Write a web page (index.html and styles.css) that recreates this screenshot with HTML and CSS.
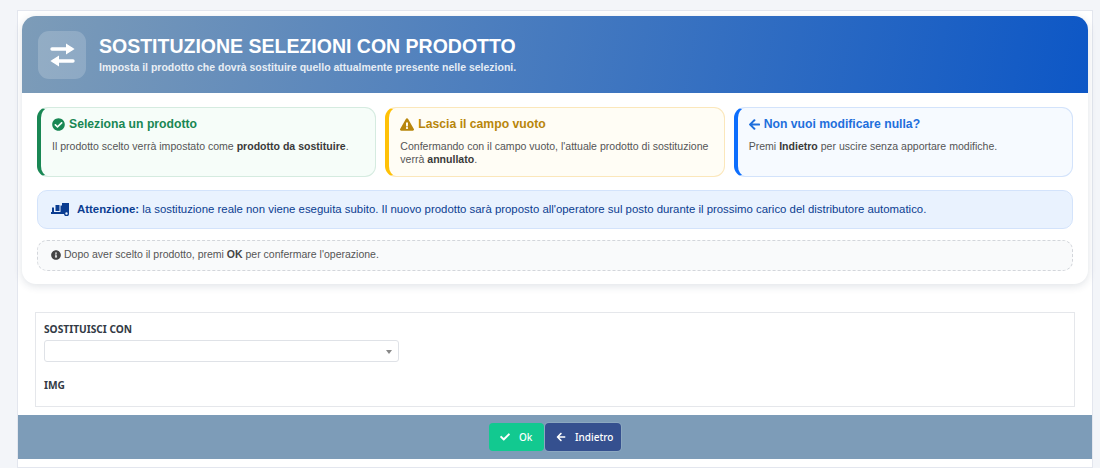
FILE: index.html
```html
<!DOCTYPE html>
<html lang="it">
<head>
<meta charset="utf-8">
<title>Sostituzione selezioni con prodotto</title>
<link rel="stylesheet" href="styles.css">
</head>
<body>
<div class="panel">
  <section class="hero">
    <header class="hero-head">
      <div class="hero-icon">
        <svg class="ico-exchange" viewBox="0 0 25 24"><path class="shaft" d="M2 6H21M23 18H4"/><path d="M16 .6 24.6 6 16 11.4ZM9 12.6.4 18 9 23.4Z"/></svg>
      </div>
      <div>
        <h1>SOSTITUZIONE SELEZIONI CON PRODOTTO</h1>
        <p>Imposta il prodotto che dovrà sostituire quello attualmente presente nelle selezioni.</p>
      </div>
    </header>
    <div class="hero-body">
      <div class="cards">
        <article class="card card-green">
          <h2><svg class="ico-13" viewBox="0 0 512 512"><path d="M504 256c0 136.967-111.033 248-248 248S8 392.967 8 256 119.033 8 256 8s248 111.033 248 248zM227.314 387.314l184-184c6.248-6.248 6.248-16.379 0-22.627l-22.627-22.627c-6.248-6.249-16.379-6.249-22.628 0L216 308.118l-70.059-70.059c-6.248-6.248-16.379-6.248-22.628 0l-22.627 22.627c-6.248 6.248-6.248 16.379 0 22.627l104 104c6.249 6.249 16.379 6.249 22.628.001z"/></svg>Seleziona un prodotto</h2>
          <p>Il prodotto scelto verrà impostato come <b>prodotto da sostituire</b>.</p>
        </article>
        <article class="card card-yellow">
          <h2><svg class="ico-tri" viewBox="0 0 576 512"><path d="M569.517 440.013C587.975 472.007 564.806 512 527.94 512H48.054c-36.937 0-59.999-40.055-41.577-71.987L246.423 23.985c18.467-32.009 64.72-31.951 83.154 0l239.94 416.028zM288 354c-25.405 0-46 20.595-46 46s20.595 46 46 46 46-20.595 46-46-20.595-46-46-46zm-43.673-165.346l7.418 136c.347 6.364 5.609 11.346 11.982 11.346h48.546c6.373 0 11.635-4.982 11.982-11.346l7.418-136c.375-6.874-5.098-12.654-11.982-12.654h-63.383c-6.884 0-12.356 5.78-11.981 12.654z"/></svg>Lascia il campo vuoto</h2>
          <p>Confermando con il campo vuoto, l'attuale prodotto di sostituzione verrà <b>annullato</b>.</p>
        </article>
        <article class="card card-blue">
          <h2><svg class="ico-arrow" viewBox="0 0 448 512"><path d="M257.5 445.1l-22.2 22.2c-9.4 9.4-24.6 9.4-33.9 0L7 273c-9.4-9.4-9.4-24.6 0-33.9L201.4 44.7c9.4-9.4 24.6-9.4 33.9 0l22.2 22.2c9.5 9.5 9.3 25-.4 34.3L136.6 216H424c13.3 0 24 10.7 24 24v32c0 13.3-10.7 24-24 24H136.6l120.5 114.8c9.8 9.3 10 24.8.4 34.3z"/></svg>Non vuoi modificare nulla?</h2>
          <p>Premi <b>Indietro</b> per uscire senza apportare modifiche.</p>
        </article>
      </div>
      <div class="alert">
        <svg class="ico-truck" viewBox="0 0 18 13"><path fill-rule="evenodd" d="M11 0h7v10.5a2.5 2.5 0 0 1-5 .4H0V9h1V4.5h2V9h6.5V2.5H11Zm4.5 9.3a1.2 1.2 0 1 0 0 2.4 1.2 1.2 0 0 0 0-2.4ZM4.5 2h4v6h-4Z"/></svg>
        <span><b>Attenzione:</b> la sostituzione reale non viene eseguita subito. Il nuovo prodotto sarà proposto all'operatore sul posto durante il prossimo carico del distributore automatico.</span>
      </div>
      <div class="note">
        <svg class="ico-info" viewBox="0 0 512 512"><path d="M256 8C119.043 8 8 119.083 8 256c0 136.997 111.043 248 248 248s248-111.003 248-248C504 119.083 392.957 8 256 8zm0 110c23.196 0 42 18.804 42 42s-18.804 42-42 42-42-18.804-42-42 18.804-42 42-42zm56 254c0 6.627-5.373 12-12 12h-88c-6.627 0-12-5.373-12-12v-24c0-6.627 5.373-12 12-12h12v-64h-12c-6.627 0-12-5.373-12-12v-24c0-6.627 5.373-12 12-12h64c6.627 0 12 5.373 12 12v100h12c6.627 0 12 5.373 12 12v24z"/></svg>
        <span>Dopo aver scelto il prodotto, premi <b>OK</b> per confermare l'operazione.</span>
      </div>
    </div>
  </section>
  <form class="form-box">
    <label class="field-label">SOSTITUISCI CON</label>
    <div class="select"><i class="caret"></i></div>
    <label class="field-label field-img">IMG</label>
  </form>
  <footer class="actions">
    <button type="button" class="btn btn-ok"><svg class="ico-btn" viewBox="0 0 512 512"><path d="M173.898 439.404l-166.4-166.4c-9.997-9.997-9.997-26.206 0-36.204l36.203-36.204c9.997-9.998 26.207-9.998 36.204 0L192 312.69 432.095 72.596c9.997-9.997 26.207-9.997 36.204 0l36.203 36.204c9.997 9.997 9.997 26.206 0 36.204l-294.4 294.401c-9.998 9.997-26.207 9.997-36.204-.001z"/></svg>Ok</button>
    <button type="button" class="btn btn-back"><svg class="ico-btn" viewBox="0 0 448 512"><path d="M257.5 445.1l-22.2 22.2c-9.4 9.4-24.6 9.4-33.9 0L7 273c-9.4-9.4-9.4-24.6 0-33.9L201.4 44.7c9.4-9.4 24.6-9.4 33.9 0l22.2 22.2c9.5 9.5 9.3 25-.4 34.3L136.6 216H424c13.3 0 24 10.7 24 24v32c0 13.3-10.7 24-24 24H136.6l120.5 114.8c9.8 9.3 10 24.8.4 34.3z"/></svg>Indietro</button>
  </footer>
</div>
</body>
</html>
```
FILE: styles.css
```css
* { box-sizing: border-box; }
html, body { margin: 0; height: 468px; overflow: hidden; }
body {
  background: #f3f5f9;
  font-family: "Liberation Sans", Arial, sans-serif;
  padding: 10px 7px 0 17px;
}
svg { fill: currentColor; display: block; flex: none; }
.panel {
  background: #fff;
  border: 1px solid #e3e6ee;
  height: 458px;
  padding-top: 5px;
}
.hero {
  margin: 0 4px;
  height: 268px;
  border-radius: 14px;
  background: #fff;
  box-shadow: 0 2px 8px rgba(30, 50, 80, .14);
  overflow: hidden;
}
.hero-head {
  height: 77px;
  display: flex;
  align-items: center;
  gap: 13px;
  padding: 0 16px;
  color: #fff;
  background: linear-gradient(100deg, #7d9cb8 0%, #0d57c6 100%);
}
.hero-icon {
  width: 48px;
  height: 48px;
  border-radius: 11px;
  background: rgba(255, 255, 255, .18);
  display: flex;
  align-items: center;
  justify-content: center;
}
.ico-exchange { width: 25px; height: 24px; }
.ico-exchange .shaft { fill: none; stroke: currentColor; stroke-width: 3.4; stroke-linecap: round; }
.hero-head h1 { margin: 0; font-size: 19.5px; line-height: 23px; font-weight: 700; }
.hero-head p { margin: 3px 0 0; font-size: 10.5px; line-height: 13px; font-weight: 700; opacity: .85; }
.hero-body { padding: 14px 15px 0; }
.cards { display: grid; grid-template-columns: repeat(3, 1fr); gap: 9px; }
.card {
  height: 70px;
  border: 1px solid;
  border-left-width: 4px;
  border-radius: 11px;
  padding: 8px 11px;
}
.card h2 {
  margin: 0 0 7px;
  font-size: 12.2px;
  line-height: 17px;
  font-weight: 700;
  display: flex;
  align-items: center;
  gap: 4px;
}
.card p { margin: 0; font-size: 10.55px; line-height: 13px; color: #555; }
.card b { color: #3a3a3a; }
.ico-13 { width: 13px; height: 13px; }
.ico-tri { width: 14px; height: 13px; }
.ico-arrow { width: 11px; height: 13px; }
.card-green { background: #f6fdf9; border-color: #d5ebe0; border-left-color: #198754; }
.card-green h2 { color: #198754; }
.card-yellow { background: #fffdf5; border-color: #fbe7bb; border-left-color: #ffc107; }
.card-yellow h2 { color: #b8860b; }
.card-blue { background: #f6faff; border-color: #d3e3fb; border-left-color: #0d6efd; }
.card-blue h2 { color: #1f6fdc; }
.alert {
  margin-top: 13px;
  height: 39px;
  border: 1px solid #d3e3fb;
  border-radius: 10px;
  background: #e9f2fe;
  color: #0b3d91;
  font-size: 11.4px;
  line-height: 13px;
  display: flex;
  align-items: center;
  gap: 8px;
  padding: 0 13px 1px;
}
.ico-truck { width: 18px; height: 13px; }
.note {
  margin-top: 11px;
  height: 31px;
  border: 1px dashed #d3d6db;
  border-radius: 10px;
  background: #f9fafb;
  color: #555;
  font-size: 10.5px;
  line-height: 13px;
  display: flex;
  align-items: center;
  gap: 3px;
  padding: 0 13px 2px;
}
.note b { color: #444; }
.ico-info { width: 10px; height: 10px; color: #444; }
.form-box {
  margin: 28px 17px 0 17px;
  height: 95px;
  border: 1px solid #e5e7eb;
  padding: 9px 8px;
}
.field-label {
  display: block;
  font-family: "Noto Sans", "Open Sans", sans-serif;
  font-size: 10.2px;
  line-height: 14px;
  font-weight: 700;
  color: #333a45;
}
.select {
  margin-top: 4px;
  width: 355px;
  height: 22px;
  border: 1px solid #dfe2e7;
  border-radius: 3px;
  background: #fff;
  position: relative;
}
.caret {
  position: absolute;
  right: 6px;
  top: 9px;
  border: 3px solid transparent;
  border-top: 4px solid #888;
  border-bottom: 0;
}
.field-img { margin-top: 16px; }
.actions {
  margin-top: 8px;
  height: 44px;
  background: #7d9cb8;
  display: flex;
  justify-content: center;
  align-items: center;
  gap: 1px;
}
.btn {
  height: 28px;
  border: 0;
  border-radius: 4px;
  color: #fff;
  font-family: "Noto Sans", "Open Sans", sans-serif;
  font-size: 10px;
  font-weight: 500;
  display: flex;
  align-items: center;
  gap: 9px;
  padding: 0 11px;
}
.ico-btn { width: 10px; height: 10px; }
.btn-ok { background: #12c990; width: 55px; }
.btn-back { background: #35508f; width: 76px; box-shadow: 0 0 0 1px rgba(255,255,255,.12); }
```
